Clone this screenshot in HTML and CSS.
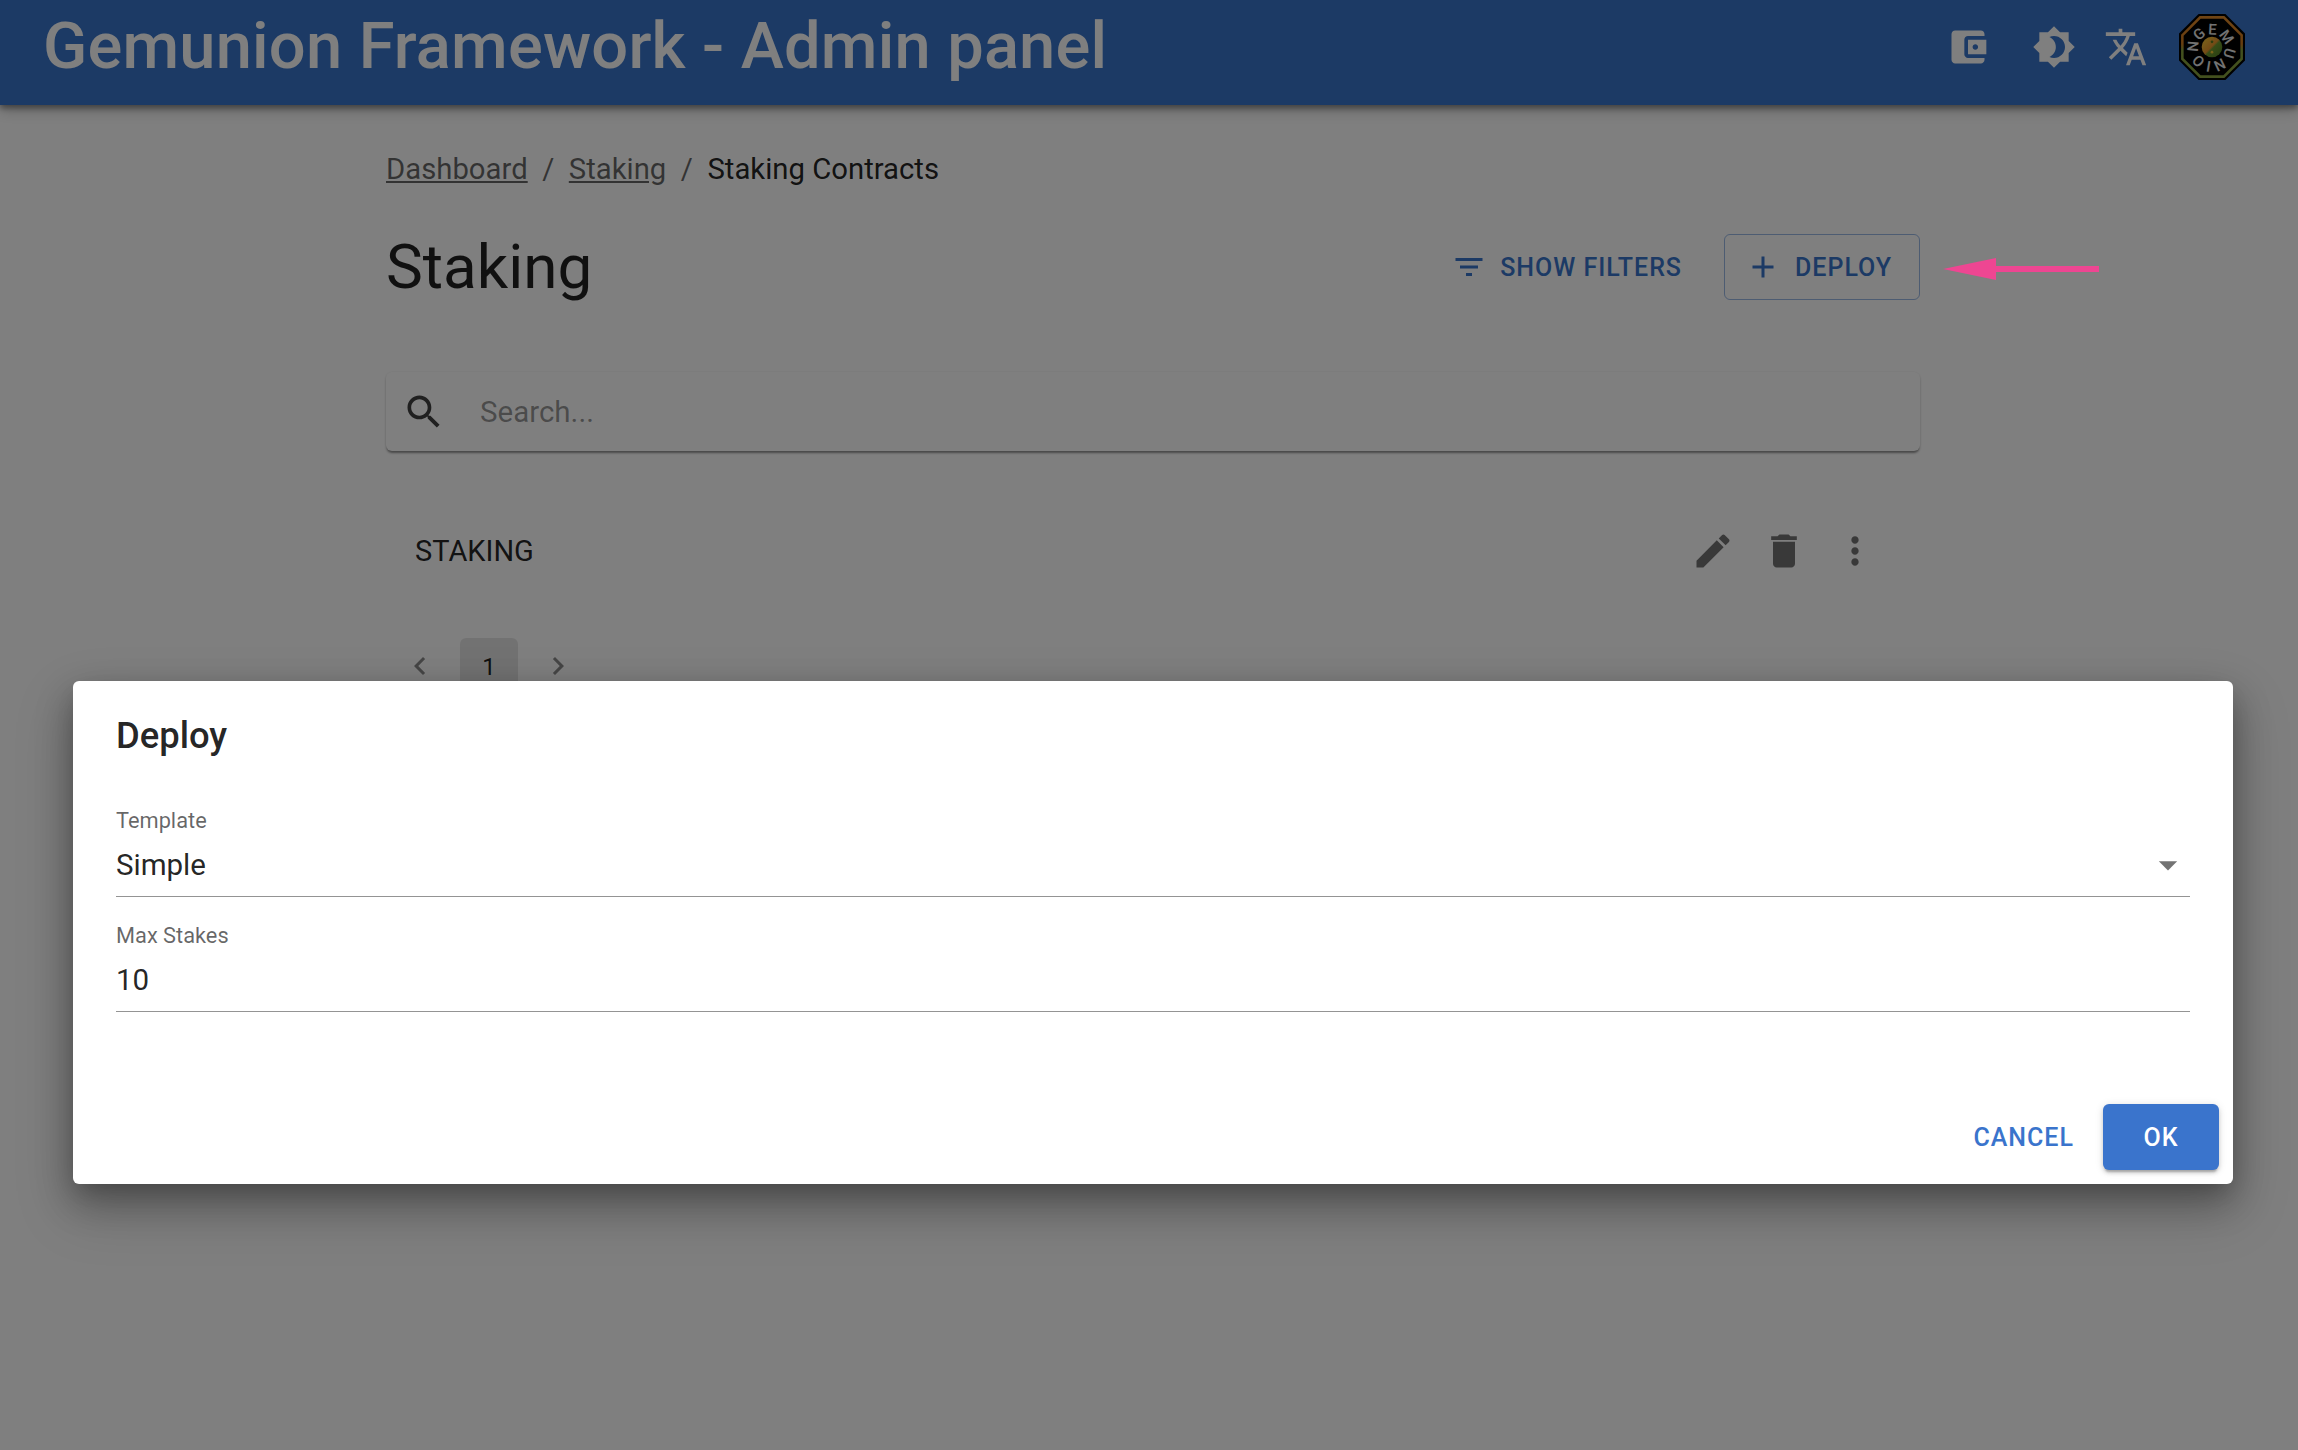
FILE: index.html
```html
<!DOCTYPE html>
<html lang="en">
<head>
<meta charset="utf-8">
<title>Gemunion Framework - Admin panel</title>
<link rel="stylesheet" href="styles.css">
</head>
<body>
<header class="appbar">
  <div class="brand">Gemunion Framework - Admin panel</div>
  <div class="tools">
    <svg class="icon tool-wallet" viewBox="0 0 24 24"><path d="M21 18v1c0 1.1-.9 2-2 2H5c-1.11 0-2-.9-2-2V5c0-1.1.89-2 2-2h14c1.1 0 2 .9 2 2v1h-9c-1.11 0-2 .9-2 2v8c0 1.1.89 2 2 2h9zm-9-2h10V8H12v8zm4-2.5c-.83 0-1.5-.67-1.5-1.5s.67-1.5 1.5-1.5 1.5.67 1.5 1.5-.67 1.5-1.5 1.5z"/></svg>
    <svg class="icon tool-theme" viewBox="0 0 24 24"><path d="M20 8.69V4h-4.69L12 .69 8.69 4H4v4.69L.69 12 4 15.31V20h4.69L12 23.31 15.31 20H20v-4.69L23.31 12 20 8.69zM12 18c-.89 0-1.74-.2-2.5-.55C11.56 16.5 13 14.42 13 12s-1.44-4.5-3.5-5.45C10.26 6.2 11.11 6 12 6c3.31 0 6 2.69 6 6s-2.69 6-6 6z"/></svg>
    <svg class="icon tool-lang" viewBox="0 0 24 24"><path d="m12.87 15.07-2.54-2.51.03-.03c1.74-1.94 2.98-4.17 3.71-6.53H17V4h-7V2H8v2H1v1.99h11.17C11.5 7.92 10.4 9.75 9 11.3 8.09 10.29 7.34 9.19 6.75 8h-2c.73 1.63 1.73 3.17 2.98 4.56l-5.09 5.02L4 19l5-5 3.11 3.11.76-2.04zM18.5 10h-2L12 22h2l1.12-3h4.75L21 22h2l-4.5-12zm-2.62 7 1.62-4.33L19.12 17h-3.24z"/></svg>
    <svg class="logo" viewBox="0 0 64 64">
      <defs>
        <linearGradient id="rim" x1="0" y1="0" x2="0" y2="1"><stop offset="0" stop-color="#e08a2a"/><stop offset=".45" stop-color="#d07a20"/><stop offset=".55" stop-color="#86a03c"/><stop offset="1" stop-color="#86a03c"/></linearGradient>
        <linearGradient id="yin" x1="0" y1="0" x2="1" y2="1"><stop offset="0" stop-color="#f6cf3a"/><stop offset=".48" stop-color="#e8962c"/><stop offset=".55" stop-color="#6f9a2f"/><stop offset="1" stop-color="#4f7a22"/></linearGradient>
        <path id="ring" d="M19.99 27.03A13 13 0 1 1 19.97 27.07"/>
      </defs>
      <polygon points="19,0 45,0 64,19 64,45 45,64 19,64 0,45 0,19" fill="#000"/>
      <polygon points="20,2 44,2 62,20 62,44 44,62 20,62 2,44 2,20" fill="url(#rim)"/>
      <polygon points="21,4.5 43,4.5 59.5,21 59.5,43 43,59.5 21,59.5 4.5,43 4.5,21" fill="#000"/>
      <text class="logo-text"><textPath href="#ring" textLength="81" lengthAdjust="spacing">GEMUNION</textPath></text>
      <circle cx="32" cy="32" r="10" fill="url(#yin)"/>
      <circle cx="32" cy="27" r="1.3" fill="#5a7a22"/>
      <circle cx="32" cy="37" r="1.3" fill="#f1c232"/>
    </svg>
  </div>
</header>

<main class="content">
  <nav class="crumbs">
    <a class="crumb-link">Dashboard</a><span class="crumb-sep">/</span>
    <a class="crumb-link">Staking</a><span class="crumb-sep">/</span>
    <span class="crumb-current">Staking Contracts</span>
  </nav>
  <div class="page-head">
    <h1 class="page-title">Staking</h1>
    <div class="head-actions">
      <button class="btn-text"><svg class="btn-icon" viewBox="0 0 24 24"><path d="M10 18h4v-2h-4v2zM3 6v2h18V6H3zm3 7h12v-2H6v2z"/></svg>Show filters</button>
      <button class="btn-outline"><svg class="btn-icon" viewBox="0 0 24 24"><path d="M19 13h-6v6h-2v-6H5v-2h6V5h2v6h6v2z"/></svg>Deploy</button>
    </div>
  </div>
  <div class="search">
    <svg class="icon search-icon" viewBox="0 0 24 24"><path d="M15.5 14h-.79l-.28-.27C15.41 12.59 16 11.11 16 9.5 16 5.91 13.09 3 9.5 3S3 5.91 3 9.5 5.91 16 9.5 16c1.61 0 3.09-.59 4.23-1.57l.27.28v.79l5 4.99L20.49 19l-4.99-5zm-6 0C7.01 14 5 11.99 5 9.5S7.01 5 9.5 5 14 7.01 14 9.5 11.99 14 9.5 14z"/></svg>
    <span class="search-ph">Search...</span>
  </div>
  <div class="row">
    <span class="row-name">STAKING</span>
    <div class="row-actions">
      <svg class="icon" viewBox="0 0 24 24"><path d="M3 17.25V21h3.75L17.81 9.94l-3.75-3.75L3 17.25zM20.71 7.04c.39-.39.39-1.02 0-1.41l-2.34-2.34a.9959.9959 0 0 0-1.41 0l-1.83 1.83 3.75 3.75 1.83-1.83z"/></svg>
      <svg class="icon" viewBox="0 0 24 24"><path d="M6 19c0 1.1.9 2 2 2h8c1.1 0 2-.9 2-2V7H6v12zM19 4h-3.5l-1-1h-5l-1 1H5v2h14V4z"/></svg>
      <svg class="icon" viewBox="0 0 24 24"><path d="M12 8c1.1 0 2-.9 2-2s-.9-2-2-2-2 .9-2 2 .9 2 2 2zm0 2c-1.1 0-2 .9-2 2s.9 2 2 2 2-.9 2-2-.9-2-2-2zm0 6c-1.1 0-2 .9-2 2s.9 2 2 2 2-.9 2-2-.9-2-2-2z"/></svg>
    </div>
  </div>
  <div class="pager">
    <svg class="pager-icon" viewBox="0 0 24 24"><path d="M15.41 7.41 14 6l-6 6 6 6 1.41-1.41L10.83 12z"/></svg>
    <span class="pager-num">1</span>
    <svg class="pager-icon" viewBox="0 0 24 24"><path d="M10 6 8.59 7.41 13.17 12l-4.58 4.59L10 18l6-6z"/></svg>
  </div>
</main>

<div class="overlay">
  <section class="dialog">
    <h2 class="dialog-title">Deploy</h2>
    <div class="dialog-body">
      <div class="field">
        <label class="field-label">Template</label>
        <div class="field-value">Simple<svg class="caret" viewBox="0 0 24 24"><path d="M7 10l5 5 5-5z"/></svg></div>
      </div>
      <div class="field">
        <label class="field-label">Max Stakes</label>
        <div class="field-value">10</div>
      </div>
    </div>
    <div class="dialog-actions">
      <button class="btn-cancel">Cancel</button>
      <button class="btn-ok">OK</button>
    </div>
  </section>
</div>

<svg class="annotation" viewBox="0 0 156 22"><path d="M0 11 53 0V8H156V14H53V22z"/></svg>
</body>
</html>
```

FILE: styles.css
```css
* { box-sizing: border-box; }
html, body { margin: 0; height: 100%; }
body {
  height: 1450px;
  overflow: hidden;
  background: #fff;
  color: rgba(0,0,0,.87);
  font-family: Roboto, "Noto Sans", sans-serif;
  font-size: 23.45px;
  position: relative;
}
button { font-family: inherit; border: 0; background: none; cursor: pointer; }
svg { display: block; fill: currentColor; }
.icon { width: 44px; height: 44px; flex: none; }

.appbar {
  height: 105px;
  background: #3874cb;
  color: #fff;
  display: flex;
  justify-content: space-between;
  padding: 0 53px 0 43px;
  box-shadow: 0 3px 6px rgba(0,0,0,.4), 0 6px 14px rgba(0,0,0,.2);
  position: relative;
}
.brand { font-size: 65px; font-weight: 500; line-height: 93px; letter-spacing: .2px; white-space: nowrap; }
.tools { display: flex; align-items: center; height: 94px; }
.tool-wallet { margin-right: 42px; }
.tool-theme { margin-right: 28px; }
.tool-lang { margin-right: 31px; }
.logo { width: 66px; height: 66px; }
.logo-text { font-family: Roboto, sans-serif; font-size: 14.5px; font-weight: 500; fill: #e6e6e6; }

.content { margin-left: 386px; width: 1534px; }
.crumbs { display: flex; align-items: center; margin-top: 47px; height: 34px; font-size: 29.3px; color: rgba(0,0,0,.6); }
.crumb-link { text-decoration: underline; }
.crumb-sep { margin: 0 14.5px; }
.crumb-current { color: rgba(0,0,0,.87); }
.page-head { display: flex; justify-content: space-between; align-items: center; margin-top: 48px; height: 66px; }
.page-title { margin: 0; font-size: 62px; font-weight: 400; line-height: 66px; }
.head-actions { display: flex; align-items: center; gap: 42px; }
.btn-text, .btn-outline {
  display: flex; align-items: center; gap: 13px;
  height: 66px;
  font-size: 25px; font-weight: 500; letter-spacing: 1px; text-transform: uppercase;
  color: #3874cb;
}
.btn-text { padding: 0; }
.btn-outline { width: 196px; padding: 0 27px 0 20px; gap: 14px; border: 1.5px solid rgba(56,116,203,.5); border-radius: 6px; }
.btn-icon { width: 36px; height: 36px; flex: none; }

.search {
  display: flex; align-items: center; gap: 20px;
  height: 79px; margin-top: 72px; padding-left: 16px;
  border-radius: 6px;
  box-shadow: 0 3px 2px -1px rgba(0,0,0,.3), 0 2px 3px rgba(0,0,0,.16), 0 0 2px rgba(0,0,0,.08);
  color: rgba(0,0,0,.75);
}
.search-ph { margin-left: 14px; font-size: 29.5px; color: rgba(0,0,0,.42); }

.row { display: flex; justify-content: space-between; align-items: center; height: 70px; margin-top: 65px; padding: 0 43px 0 29px; }
.row-name { font-size: 29px; }
.row-actions { display: flex; gap: 27px; color: rgba(0,0,0,.55); }

.pager { display: flex; align-items: flex-start; margin-top: 52px; padding-left: 16px; color: rgba(0,0,0,.45); }
.pager-icon { width: 36px; height: 36px; margin-top: 10px; }
.pager-num {
  width: 58px; height: 58px; margin: 0 22px; border-radius: 6px;
  background: rgba(0,0,0,.1); color: rgba(0,0,0,.87);
  font-size: 24px; text-align: center; line-height: 58px;
}

.overlay {
  position: absolute; inset: 0;
  background: rgba(0,0,0,.5);
  padding: 681px 65px 0 73px;
}
.dialog {
  height: 503px;
  background: #fff;
  border-radius: 6px;
  box-shadow: 0 16px 36px 2px rgba(0,0,0,.24), 0 24px 56px 4px rgba(0,0,0,.18), 0 9px 22px -8px rgba(0,0,0,.2);
  padding: 0 14px 0 43px;
  display: flex; flex-direction: column;
}
.dialog-title { margin: 33px 0 0; font-size: 36.4px; font-weight: 500; line-height: 44px; }
.dialog-body { display: flex; flex-direction: column; margin-top: 24px; padding-right: 29px; flex: 1; }
.field { border-bottom: 1.5px solid rgba(0,0,0,.42); height: 115px; display: flex; flex-direction: column; }
.field-label { font-size: 21.8px; line-height: 24px; margin-top: 27px; color: rgba(0,0,0,.6); }
.field-value { display: flex; justify-content: space-between; align-items: center; margin-top: 10px; font-size: 29.5px; line-height: 44px; }
.caret { width: 44px; height: 44px; margin-right: 0; color: rgba(0,0,0,.55); }
.dialog-actions { display: flex; justify-content: flex-end; align-items: center; gap: 29px; height: 66px; margin-bottom: 14px; }
.btn-cancel, .btn-ok { font-size: 25px; font-weight: 500; letter-spacing: 1px; text-transform: uppercase; }
.btn-cancel { color: #3a74cc; padding: 0; }
.btn-ok {
  width: 116px; height: 66px; border-radius: 6px; background: #3a74cc; color: #fff;
  box-shadow: 0 4px 2px -2px rgba(0,0,0,.2), 0 3px 4px rgba(0,0,0,.14), 0 1px 8px rgba(0,0,0,.12);
}

.annotation { position: absolute; left: 1943px; top: 258px; width: 156px; height: 22px; fill: #ee4692; }
```
